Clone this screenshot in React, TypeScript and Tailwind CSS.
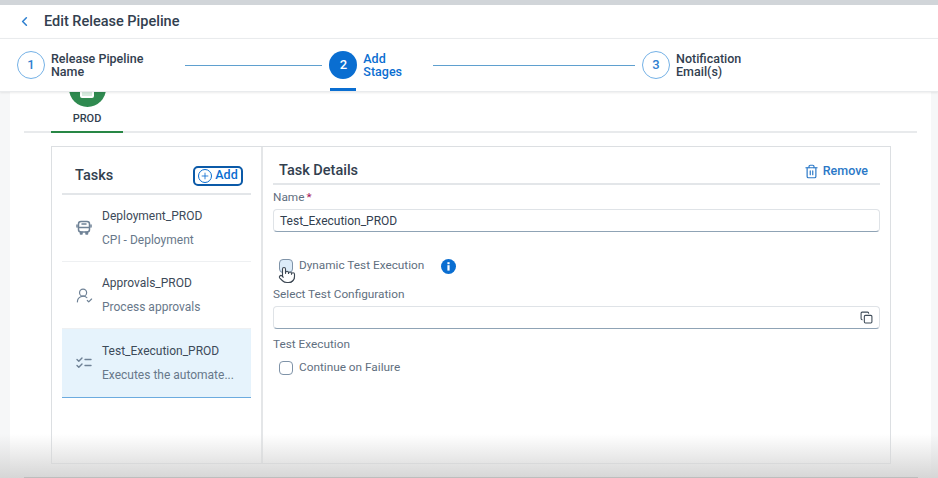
import { ChevronLeft, Copy, Plus, Pointer, Trash2, UserRoundCheck } from 'lucide-react'

function Step({ n, lines, active }: { n: number; lines: [string, string]; active?: boolean }) {
  return (
    <div className="relative flex h-full items-center gap-[6px]">
      <div
        className={
          active
            ? 'flex h-[28px] w-[28px] shrink-0 items-center justify-center rounded-full bg-[#0a6ed1] text-[13px] font-medium text-white'
            : 'flex h-[28px] w-[28px] shrink-0 items-center justify-center rounded-full border border-[#74b1e6] bg-white text-[13px] font-medium text-[#2f80d0]'
        }
      >
        {n}
      </div>
      <div className={active ? 'text-[12.5px] leading-[13.5px] font-medium text-[#0a6ed1]' : 'text-[12.5px] leading-[13.5px] font-medium text-[#32404f]'}>
        {lines[0]}
        <br />
        {lines[1]}
      </div>
      {active && <div className="absolute bottom-0 left-px h-[3px] w-[26px] bg-[#0a6ed1]" />}
    </div>
  )
}

function TaskRow({ title, sub, icon, selected }: { title: string; sub: string; icon: React.ReactNode; selected?: boolean }) {
  return (
    <div
      className={
        selected
          ? 'flex h-[69px] items-center border-b border-[#6cabdf] bg-[#e6f3fc]'
          : 'flex h-[67px] items-center border-b border-[#eef0f2]'
      }
    >
      <div className="flex w-[40px] justify-center pl-[4px] text-[#6f8296]">{icon}</div>
      <div className="min-w-0">
        <div className="text-[12px] leading-[16px] text-[#3c4a59]">{title}</div>
        <div className="mt-[8px] text-[12px] leading-[16px] text-[#68788a]">{sub}</div>
      </div>
    </div>
  )
}

function Field({ children }: { children?: React.ReactNode }) {
  return (
    <div className="flex h-[23px] items-center justify-between rounded-[4px] border border-[#dfe3e7] border-b-[#8fa3b5] bg-white px-[6px] text-[12px] text-[#32404f]">
      {children}
    </div>
  )
}

export default function App() {
  return (
    <div className='relative flex h-[478px] w-[938px] flex-col overflow-hidden bg-[#f6f7f8] font-["Roboto",sans-serif]'>
      <div className="h-[5px] shrink-0 bg-[#d1d5d9]" />

      <header className="flex h-[33px] shrink-0 items-center bg-white pl-[17px]">
        <ChevronLeft size={15} strokeWidth={2.5} className="text-[#2f80d0]" />
        <h1 className="ml-[12px] text-[14.5px] font-medium text-[#32404f]">Edit Release Pipeline</h1>
      </header>

      <nav className="z-10 flex h-[54px] shrink-0 items-center border-y border-[#e9ebed] bg-white pl-[17px] shadow-[0_1px_2px_rgba(0,0,0,0.08)]">
        <Step n={1} lines={['Release Pipeline', 'Name']} />
        <div className="mr-[7px] ml-[42px] h-px w-[137px] bg-[#5fa0cf]" />
        <Step n={2} lines={['Add', 'Stages']} active />
        <div className="mr-[7px] ml-[31px] h-px w-[202px] bg-[#5fa0cf]" />
        <Step n={3} lines={['Notification', 'Email(s)']} />
      </nav>

      <main className="mr-[7px] ml-[10px] flex min-h-0 flex-1 flex-col bg-white px-[14px]">
        <div className="h-[41px] shrink-0 border-b-2 border-[#e8eaec] pl-[27px]">
          <div className="flex h-[41px] w-[72px] flex-col items-center border-b-2 border-[#288745]">
            <div className="-mt-[22px] flex h-[37px] w-[37px] shrink-0 items-center justify-center rounded-full bg-[#2f8a50]">
              <div className="mt-[9px] h-[9px] w-[14px] rounded-[2px] border-2 border-white bg-[#d7ebdf]" />
            </div>
            <div className="mt-[5px] text-[11px] leading-[14px] font-medium text-[#32404f]">PROD</div>
          </div>
        </div>

        <section className="mt-[13px] ml-[27px] flex h-[318px] w-[840px] shrink-0 border border-[#dcdfe2]">
          <div className="w-[211px] shrink-0 border-r-2 border-[#e4e6e8] px-[10px]">
            <div className="flex h-[48px] items-center justify-between border-b-2 border-[#e3e6e9] pt-[11px] pr-[8px] pl-[13px]">
              <span className="text-[14.5px] font-medium text-[#32404f]">Tasks</span>
              <button className="flex h-[20px] w-[50px] items-center justify-center gap-[3px] rounded-[5px] border-2 border-[#0b5aa8] text-[12.5px] font-medium text-[#0a6ed1]">
                <span className="flex h-[14px] w-[14px] items-center justify-center rounded-full border border-[#0a6ed1]">
                  <Plus size={10} strokeWidth={2} />
                </span>
                Add
              </button>
            </div>
            <TaskRow
              title="Deployment_PROD"
              sub="CPI - Deployment"
              icon={
                <svg width="16" height="16" viewBox="0 0 16 16" fill="none" stroke="currentColor" strokeWidth="1.5" strokeLinecap="round" strokeLinejoin="round">
                  <rect x="2.5" y="1.5" width="11" height="10.5" rx="2.5" />
                  <path d="M2.5 7.5h11" />
                  <path d="M6 4h4" />
                  <path d="M4.5 12v2h1.5v-2" />
                  <path d="M10 12v2h1.5v-2" />
                  <path d="M1 5v2" />
                  <path d="M15 5v2" />
                </svg>
              }
            />
            <TaskRow title="Approvals_PROD" sub="Process approvals" icon={<UserRoundCheck size={17} strokeWidth={1.7} />} />
            <TaskRow
              title="Test_Execution_PROD"
              sub="Executes the automate..."
              selected
              icon={
                <svg width="16" height="16" viewBox="0 0 16 16" fill="none" stroke="currentColor" strokeWidth="1.4" strokeLinecap="round" strokeLinejoin="round">
                  <path d="M1 4.5l1.8 1.8L6 3" />
                  <path d="M1 10.5l1.8 1.8L6 9" />
                  <path d="M9 4.5h6" />
                  <path d="M9 10.5h6" />
                </svg>
              }
            />
          </div>

          <div className="min-w-0 flex-1 px-[10px]">
            <div className="flex h-[38px] items-center justify-between border-b-2 border-[#e3e6e9] pt-[12px] pr-[12px] pl-[6px]">
              <span className="text-[14.5px] font-medium text-[#32404f]">Task Details</span>
              <span className="flex items-center gap-[4px] text-[12.5px] font-medium text-[#2a78c7]">
                <Trash2 size={15} strokeWidth={1.9} />
                Remove
              </span>
            </div>

            <div className="mt-[3px] h-[18px] text-[11.8px] leading-[18px] text-[#5f6f80]">
              Name<span className="ml-[2px] text-[#a5175a]">*</span>
            </div>
            <div className="mt-[3px]">
              <Field>Test_Execution_PROD</Field>
            </div>

            <div className="relative mt-[26px] flex h-[16px] items-center pl-[6px]">
              <div className="h-[14px] w-[14px] rounded-[4px] border border-[#7f93a8] bg-[#dcebf8]" />
              <span className="ml-[6px] text-[11.8px] text-[#5f6f80]">Dynamic Test Execution</span>
              <svg width="15" height="15" viewBox="0 0 15 15" className="ml-[17px]">
                <circle cx="7.5" cy="7.5" r="7.5" fill="#0a6ed1" />
                <rect x="6.4" y="6.2" width="2.2" height="5.4" fill="#fff" />
                <rect x="6.4" y="3.2" width="2.2" height="2" fill="#fff" />
              </svg>
              <Pointer size={18} strokeWidth={1.5} className="absolute top-[8px] left-[5px] fill-white text-[#3b4652]" />
            </div>

            <div className="mt-[11px] h-[18px] text-[11.8px] leading-[18px] text-[#5f6f80]">Select Test Configuration</div>
            <div className="mt-[3px]">
              <Field>
                <span />
                <Copy size={13} strokeWidth={2} className="text-[#3f4c59]" />
              </Field>
            </div>

            <div className="mt-[6px] h-[18px] text-[11.8px] leading-[18px] text-[#5f6f80]">Test Execution</div>
            <div className="mt-[7px] flex h-[16px] items-center pl-[6px]">
              <div className="h-[14px] w-[14px] rounded-[4px] border border-[#7f93a8] bg-white" />
              <span className="ml-[6px] text-[11.8px] text-[#5f6f80]">Continue on Failure</span>
            </div>
          </div>
        </section>
      </main>

      <div className="pointer-events-none absolute right-0 bottom-0 left-0 z-20 h-[44px] bg-gradient-to-b from-transparent to-[#d6d6d6]" />
      <div className="absolute right-[20px] bottom-0 left-[24px] z-20 h-px bg-[#bdbdbd]" />
    </div>
  )
}
